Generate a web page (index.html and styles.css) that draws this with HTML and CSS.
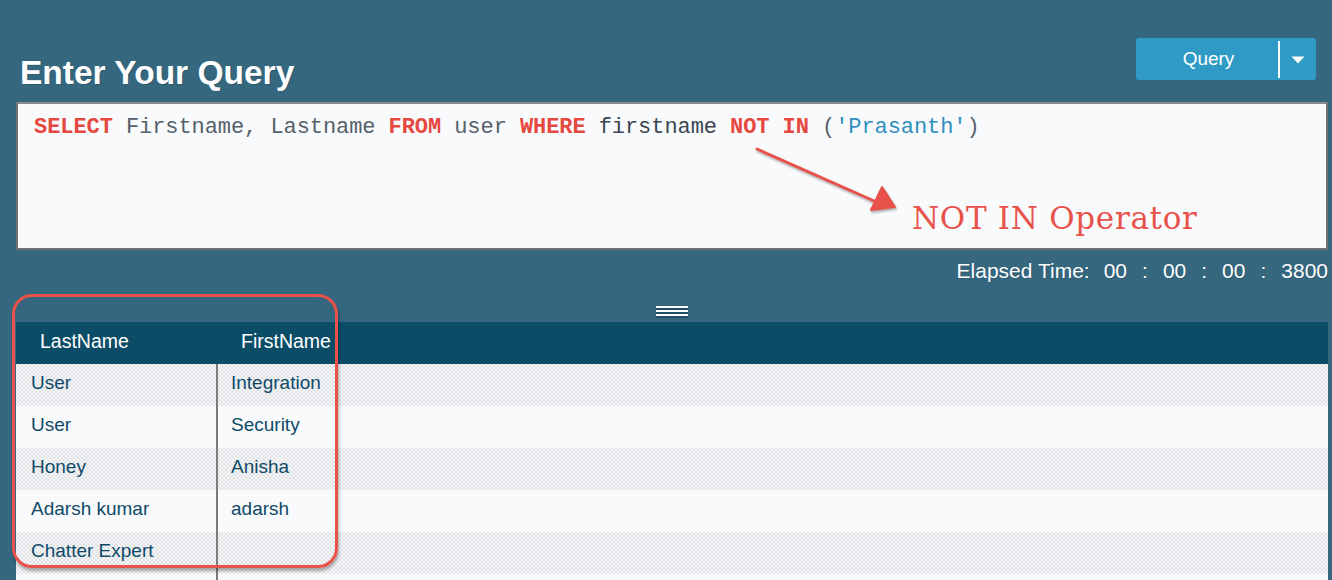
FILE: index.html
```html
<!DOCTYPE html>
<html>
<head>
<meta charset="utf-8">
<link rel="stylesheet" href="styles.css">
</head>
<body>
<div class="page">
  <div class="top">
    <h1 class="title">Enter Your Query</h1>
    <div class="query-btn">
      <span class="btn-label">Query</span>
      <span class="btn-sep"></span>
      <span class="btn-caret"><svg width="14" height="8" viewBox="0 0 14 8"><path d="M0.5 0.5 H13.5 L7 7.5 Z" fill="#fff"/></svg></span>
    </div>
  </div>

  <div class="editor">
    <div class="sql"><span class="kw">SELECT</span> Firstname, Lastname <span class="kw">FROM</span> user <span class="kw">WHERE</span> <span class="dark">firstname</span> <span class="kw">NOT IN</span> (<span class="str">'Prasanth'</span>)</div>
    <svg class="arrow" width="180" height="90" viewBox="0 0 180 90">
      <path d="M2 2 L126 57" stroke="#e8524a" stroke-width="3" stroke-linecap="round" fill="none"/>
      <path d="M127 40 L116 63 L140 60 Z" fill="#e8524a" stroke="#e8524a" stroke-width="2" stroke-linejoin="round"/>
    </svg>
    <div class="note">NOT IN Operator</div>
  </div>

  <div class="elapsed">
    <span>Elapsed Time:</span>
    <span>00</span><span>:</span><span>00</span><span>:</span><span>00</span><span>:</span><span>3800</span>
  </div>

  <div class="results">
    <div class="grip-row"><div class="grip"></div></div>
    <div class="table">
      <div class="row head">
        <div class="cell">LastName</div>
        <div class="cell">FirstName</div>
      </div>
      <div class="row odd"><div class="cell">User</div><div class="cell">Integration</div></div>
      <div class="row"><div class="cell">User</div><div class="cell">Security</div></div>
      <div class="row odd"><div class="cell">Honey</div><div class="cell">Anisha</div></div>
      <div class="row"><div class="cell">Adarsh kumar</div><div class="cell">adarsh</div></div>
      <div class="row odd"><div class="cell">Chatter Expert</div><div class="cell"></div></div>
      <div class="row tail"><div class="cell"></div><div class="cell"></div></div>
    </div>
    <div class="highlight"></div>
  </div>
</div>
</body>
</html>
```

FILE: styles.css
```css
html, body {
  margin: 0;
  padding: 0;
  background: #35677f;
  overflow: hidden;
  height: 580px;
}

.page {
  font-family: "Liberation Sans", Arial, sans-serif;
  color: #fff;
  height: 580px;
  overflow: hidden;
}

.top {
  height: 102px;
  box-sizing: border-box;
  display: flex;
  justify-content: space-between;
  align-items: flex-start;
  padding: 0 16px 0 20px;
}

.title {
  margin: 56px 0 0 0;
  font-size: 33.5px;
  line-height: 33px;
  font-weight: bold;
  color: #fff;
  text-shadow: 1px 1px 0 rgba(0, 0, 0, 0.15);
}

.query-btn {
  margin-top: 38px;
  width: 180px;
  height: 42px;
  background: #2f9ac5;
  border-radius: 3px;
  display: flex;
  align-items: center;
}

.btn-label {
  width: 142px;
  text-align: center;
  font-size: 19px;
  color: #fff;
  padding-left: 3px;
  box-sizing: border-box;
}

.btn-sep {
  width: 2px;
  height: 37px;
  background: #fff;
}

.btn-caret {
  flex: 1;
  display: flex;
  justify-content: center;
  align-items: center;
  padding-top: 1px;
}

.editor {
  position: relative;
  margin: 0 4px 0 16px;
  height: 148px;
  box-sizing: border-box;
  border: 2px solid #707070;
  border-top-color: #8a8a8a;
  background: #f9fafc;
  padding: 13px 0 0 16px;
}

.sql {
  font-family: "Liberation Mono", "Courier New", monospace;
  font-size: 22px;
  line-height: 22px;
  letter-spacing: -0.07px;
  color: #56616b;
  white-space: pre;
}

.sql .kw {
  color: #e5483f;
  font-weight: bold;
}

.sql .dark {
  color: #3b4650;
}

.sql .str {
  color: #2f8fbd;
}

.arrow {
  position: absolute;
  left: 737px;
  top: 43px;
  filter: drop-shadow(1px 2px 1px rgba(0, 0, 0, 0.3));
}

.note {
  position: absolute;
  left: 894px;
  top: 96px;
  font-family: "DejaVu Serif", "Liberation Serif", serif;
  font-size: 31px;
  line-height: 36px;
  letter-spacing: 0.7px;
  color: #e8524a;
}

.elapsed {
  margin-top: 10px;
  display: flex;
  justify-content: flex-end;
  gap: 15px;
  padding-right: 4px;
  font-size: 21px;
  line-height: 21px;
  color: #fff;
  text-shadow: 1px 1px 0 rgba(0, 0, 0, 0.15);
}

.elapsed span:first-child {
  margin-right: -1px;
}

.results {
  position: relative;
  margin: 0 4px 0 16px;
}

.grip-row {
  height: 41px;
  box-sizing: border-box;
  display: flex;
  justify-content: center;
  align-items: flex-end;
  padding-bottom: 4px;
}

.grip {
  width: 32px;
  height: 12px;
  background: repeating-linear-gradient(to bottom, #ffffff 0 2px, #1d4f67 2px 4px);
}

.table {
  background: #f9fafc;
}

.row {
  display: grid;
  grid-template-columns: 202px 1fr;
  height: 42px;
  box-sizing: border-box;
}

.row.tail {
  height: 6px;
}

.row .cell {
  font-size: 19px;
  line-height: 38px;
  padding-bottom: 4px;
  color: #0f4a68;
  white-space: nowrap;
}

.row.tail .cell {
  padding-bottom: 0;
}

.row .cell:first-child {
  padding-left: 15px;
  border-right: 2px solid #7b7b7b;
}

.row .cell:last-child {
  padding-left: 13px;
}

.row.head {
  background: #0b4c67;
}

.row.head .cell {
  color: #fff;
  font-size: 19.5px;
}

.row.head .cell:first-child {
  padding-left: 24px;
  border-right-color: transparent;
}

.row.head .cell:last-child {
  padding-left: 23px;
}

.row.odd {
  background-color: #f7f8fa;
  background-image:
    radial-gradient(circle, #d2d3d7 0.6px, transparent 0.9px),
    radial-gradient(circle, #d2d3d7 0.6px, transparent 0.9px);
  background-size: 4px 4px, 4px 4px;
  background-position: 0 0, 2px 2px;
}

.highlight {
  position: absolute;
  left: -4px;
  top: 13px;
  width: 326px;
  height: 274px;
  box-sizing: border-box;
  border: 3.5px solid #e8524a;
  border-radius: 20px;
  box-shadow: 1px 3px 3px rgba(0, 0, 0, 0.3);
}
```
